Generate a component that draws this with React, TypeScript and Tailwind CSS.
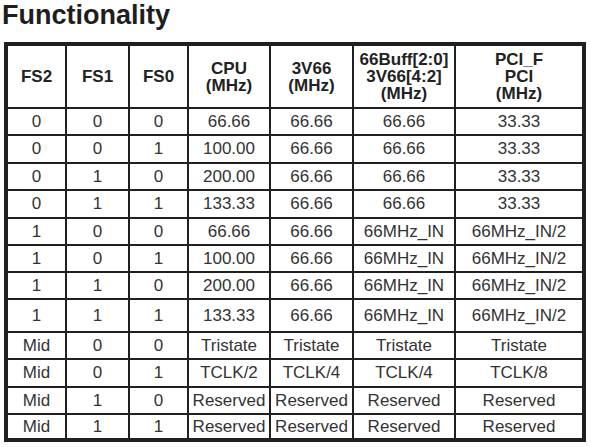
const rows: { cells: string[]; h: string }[] = [
  { cells: ["0", "0", "0", "66.66", "66.66", "66.66", "33.33"], h: "h-[27px]" },
  { cells: ["0", "0", "1", "100.00", "66.66", "66.66", "33.33"], h: "h-[28px]" },
  { cells: ["0", "1", "0", "200.00", "66.66", "66.66", "33.33"], h: "h-[27px]" },
  { cells: ["0", "1", "1", "133.33", "66.66", "66.66", "33.33"], h: "h-[28px]" },
  { cells: ["1", "0", "0", "66.66", "66.66", "66MHz_IN", "66MHz_IN/2"], h: "h-[27px]" },
  { cells: ["1", "0", "1", "100.00", "66.66", "66MHz_IN", "66MHz_IN/2"], h: "h-[27px]" },
  { cells: ["1", "1", "0", "200.00", "66.66", "66MHz_IN", "66MHz_IN/2"], h: "h-[27px]" },
  { cells: ["1", "1", "1", "133.33", "66.66", "66MHz_IN", "66MHz_IN/2"], h: "h-[33px]" },
  { cells: ["Mid", "0", "0", "Tristate", "Tristate", "Tristate", "Tristate"], h: "h-[27px]" },
  { cells: ["Mid", "0", "1", "TCLK/2", "TCLK/4", "TCLK/4", "TCLK/8"], h: "h-[28px]" },
  { cells: ["Mid", "1", "0", "Reserved", "Reserved", "Reserved", "Reserved"], h: "h-[27px]" },
  { cells: ["Mid", "1", "1", "Reserved", "Reserved", "Reserved", "Reserved"], h: "h-[23px]" },
];

const headers: string[][] = [
  ["FS2"],
  ["FS1"],
  ["FS0"],
  ["CPU", "(MHz)"],
  ["3V66", "(MHz)"],
  ["66Buff[2:0]", "3V66[4:2]", "(MHz)"],
  ["PCI_F", "PCI", "(MHz)"],
];

const widths = ["w-[59px]", "w-[63px]", "w-[59px]", "w-[82px]", "w-[83px]", "w-[102px]", "w-[126px]"];

export default function App() {
  return (
    <div className="w-[591px] h-[447px] bg-white font-['Liberation_Sans',Arial,sans-serif] overflow-hidden">
      <h1 className="pl-[2px] text-[27px] leading-[30px] font-bold text-[#1e1e1e]">Functionality</h1>

      <div className="mt-[12px] ml-[4px] w-[582px] border-4 border-[#231f20]">
        <table className="table-fixed border-separate border-spacing-0 w-[574px]">
          <colgroup>
            {widths.map((w, i) => (
              <col key={i} className={w} />
            ))}
          </colgroup>
          <thead>
            <tr className="h-[63px]">
              {headers.map((lines, i) => (
                <th
                  key={i}
                  className={`p-0 text-center align-middle text-[17px] leading-[17px] font-bold text-[#222] border-b-2 border-[#231f20] ${
                    i < 6 ? "border-r-2" : ""
                  }`}
                >
                  {lines.map((l) => (
                    <div key={l}>{l}</div>
                  ))}
                </th>
              ))}
            </tr>
          </thead>
          <tbody>
            {rows.map((r, ri) => (
              <tr key={ri} className={r.h}>
                {r.cells.map((c, ci) => (
                  <td
                    key={ci}
                    className={`p-0 text-center align-middle text-[17px] leading-[20px] text-[#333] whitespace-nowrap border-[#231f20] ${
                      ci < 6 ? "border-r-2" : ""
                    } ${ri < rows.length - 1 ? "border-b-2" : ""}`}
                  >
                    {c}
                  </td>
                ))}
              </tr>
            ))}
          </tbody>
        </table>
      </div>
    </div>
  );
}
